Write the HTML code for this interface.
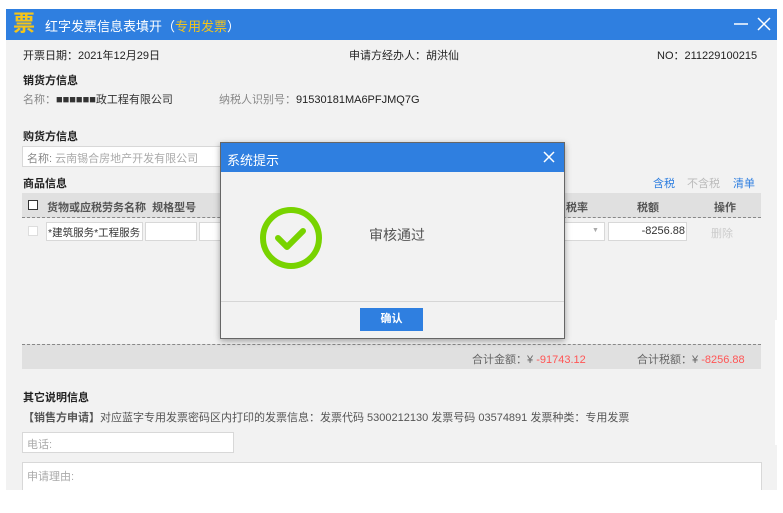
<!DOCTYPE html>
<html><head><meta charset="utf-8"><style>
*{margin:0;padding:0;box-sizing:border-box}
body{width:783px;height:513px;background:#fff;position:relative;overflow:hidden;font-family:"Liberation Sans","Noto Sans CJK SC",sans-serif;font-size:11px;color:#222}
.a{position:absolute;white-space:nowrap}
.win{position:absolute;left:6px;top:9px;width:771px;height:481px;background:#f2f2f2}
.tb{position:absolute;left:6px;top:9px;width:771px;height:31px;background:#2f7fe0}
.b{font-weight:bold}
.g{color:#888}
.inp{position:absolute;background:#fff;border:1px solid #d8d8d8}
</style></head><body>
<div class="win"></div>
<div class="tb"></div>
<div class="a" style="left:13px;top:12px;width:24px;height:24px;color:#f5c518;font-size:22px;font-weight:bold;line-height:24px">票</div>
<div class="a" style="left:45px;top:16px;font-size:13px;color:#fff">红字发票信息表填开（<span style="color:#f5c518">专用发票</span>）</div>
<svg class="a" style="left:733px;top:16px" width="40" height="16" viewBox="0 0 40 16"><path d="M1 8H15" stroke="#fff" stroke-width="1.5"/><path d="M25 2L37 14M37 2L25 14" stroke="#fff" stroke-width="1.5"/></svg>

<div class="a" style="left:23px;top:47px">开票日期：2021年12月29日</div>
<div class="a" style="left:349px;top:47px">申请方经办人：胡洪仙</div>
<div class="a" style="left:657px;top:47px">NO：211229100215</div>
<div class="a b" style="left:23px;top:72px">销货方信息</div>
<div class="a g" style="left:23px;top:91px">名称：<span style="color:#333">■■■■■■政工程有限公司</span></div>
<div class="a g" style="left:219px;top:91px">纳税人识别号：<span style="color:#222">91530181MA6PFJMQ7G</span></div>
<div class="a b" style="left:23px;top:128px">购货方信息</div>
<div class="inp" style="left:22px;top:146px;width:210px;height:21px"></div>
<div class="a g" style="left:27px;top:150px;color:#aaa"><span style="color:#888">名称:</span> 云南锡合房地产开发有限公司</div>
<div class="a b" style="left:23px;top:175px">商品信息</div>
<div class="a" style="left:653px;top:175px;color:#2f7fe0">含税</div>
<div class="a" style="left:687px;top:175px;color:#bbb">不含税</div>
<div class="a" style="left:733px;top:175px;color:#2f7fe0">清单</div>
<div class="a" style="left:22px;top:193px;width:739px;height:25px;background:#e0e0e0;border-bottom:1px dashed #888"></div>
<div class="a" style="left:28px;top:200px;width:10px;height:10px;border:1px solid #333;background:#fff"></div>
<div class="a b" style="left:47px;top:199px;color:#555">货物或应税劳务名称&nbsp;&nbsp;规格型号</div>
<div class="a b" style="left:566px;top:199px;color:#555">税率</div>
<div class="a b" style="left:637px;top:199px;color:#555">税额</div>
<div class="a b" style="left:714px;top:199px;color:#555">操作</div>
<div class="a" style="left:28px;top:226px;width:10px;height:10px;border:1px solid #ddd;background:#fff"></div>
<div class="inp" style="left:46px;top:222px;width:97px;height:19px"></div>
<div class="a" style="left:48px;top:225px;color:#333;font-size:10.5px">*建筑服务*工程服务</div>
<div class="inp" style="left:145px;top:222px;width:52px;height:19px"></div>
<div class="inp" style="left:199px;top:222px;width:30px;height:19px"></div>
<div class="inp" style="left:558px;top:222px;width:47px;height:19px"></div>
<div class="a" style="left:592px;top:227px;color:#aaa;font-size:7px">▼</div>
<div class="inp" style="left:608px;top:222px;width:79px;height:19px"></div>
<div class="a" style="left:608px;top:225px;width:77px;text-align:right;color:#333">-8256.88</div>
<div class="a" style="left:711px;top:225px;color:#ccc">删除</div>

<div class="a" style="left:22px;top:344px;width:739px;height:25px;background:#e0e0e0;border-top:1px dashed #888"></div>
<div class="a" style="left:472px;top:351px;color:#666">合计金额：¥ <span style="color:#f55">-91743.12</span></div>
<div class="a" style="left:637px;top:351px;color:#666">合计税额：¥ <span style="color:#f55">-8256.88</span></div>
<div class="a b" style="left:23px;top:389px">其它说明信息</div>
<div class="a" style="left:23px;top:409px;color:#555"><b>【销售方申请】</b>对应蓝字专用发票密码区内打印的发票信息：发票代码 5300212130 发票号码 03574891 发票种类：专用发票</div>
<div class="inp" style="left:22px;top:432px;width:212px;height:21px"></div>
<div class="a" style="left:27px;top:436px;color:#aaa">电话:</div>
<div class="inp" style="left:22px;top:462px;width:740px;height:30px"></div>
<div class="a" style="left:27px;top:468px;color:#aaa">申请理由:</div>
<div class="a" style="left:0;top:490px;width:783px;height:23px;background:#fff"></div>
<div class="a" style="left:775px;top:320px;width:3px;height:125px;background:#fff"></div>

<div class="a" style="left:220px;top:142px;width:345px;height:197px;background:#f2f2f2;border:1px solid #666;box-shadow:0 2px 6px rgba(0,0,0,.35)"></div>
<div class="a" style="left:221px;top:143px;width:343px;height:29px;background:#2f7fe0"></div>
<div class="a" style="left:227px;top:150px;color:#fff;font-size:13px">系统提示</div>
<svg class="a" style="left:543px;top:151px" width="12" height="12" viewBox="0 0 12 12"><path d="M1 1L11 11M11 1L1 11" stroke="#fff" stroke-width="1.5"/></svg>
<svg class="a" style="left:259px;top:206px" width="64" height="64" viewBox="0 0 64 64"><circle cx="32" cy="32" r="28" fill="none" stroke="#78d300" stroke-width="6"/><path d="M19 32 L28 41 L44 25" fill="none" stroke="#78d300" stroke-width="6" stroke-linecap="round" stroke-linejoin="round"/></svg>
<div class="a" style="left:369px;top:225px;font-size:14px;color:#555">审核通过</div>
<div class="a" style="left:221px;top:301px;width:343px;height:1px;background:#d6d6d6"></div>
<div class="a" style="left:360px;top:308px;width:63px;height:23px;background:#2f7fe0;color:#fff;font-weight:bold;text-align:center;line-height:23px">确认</div>
</body></html>
